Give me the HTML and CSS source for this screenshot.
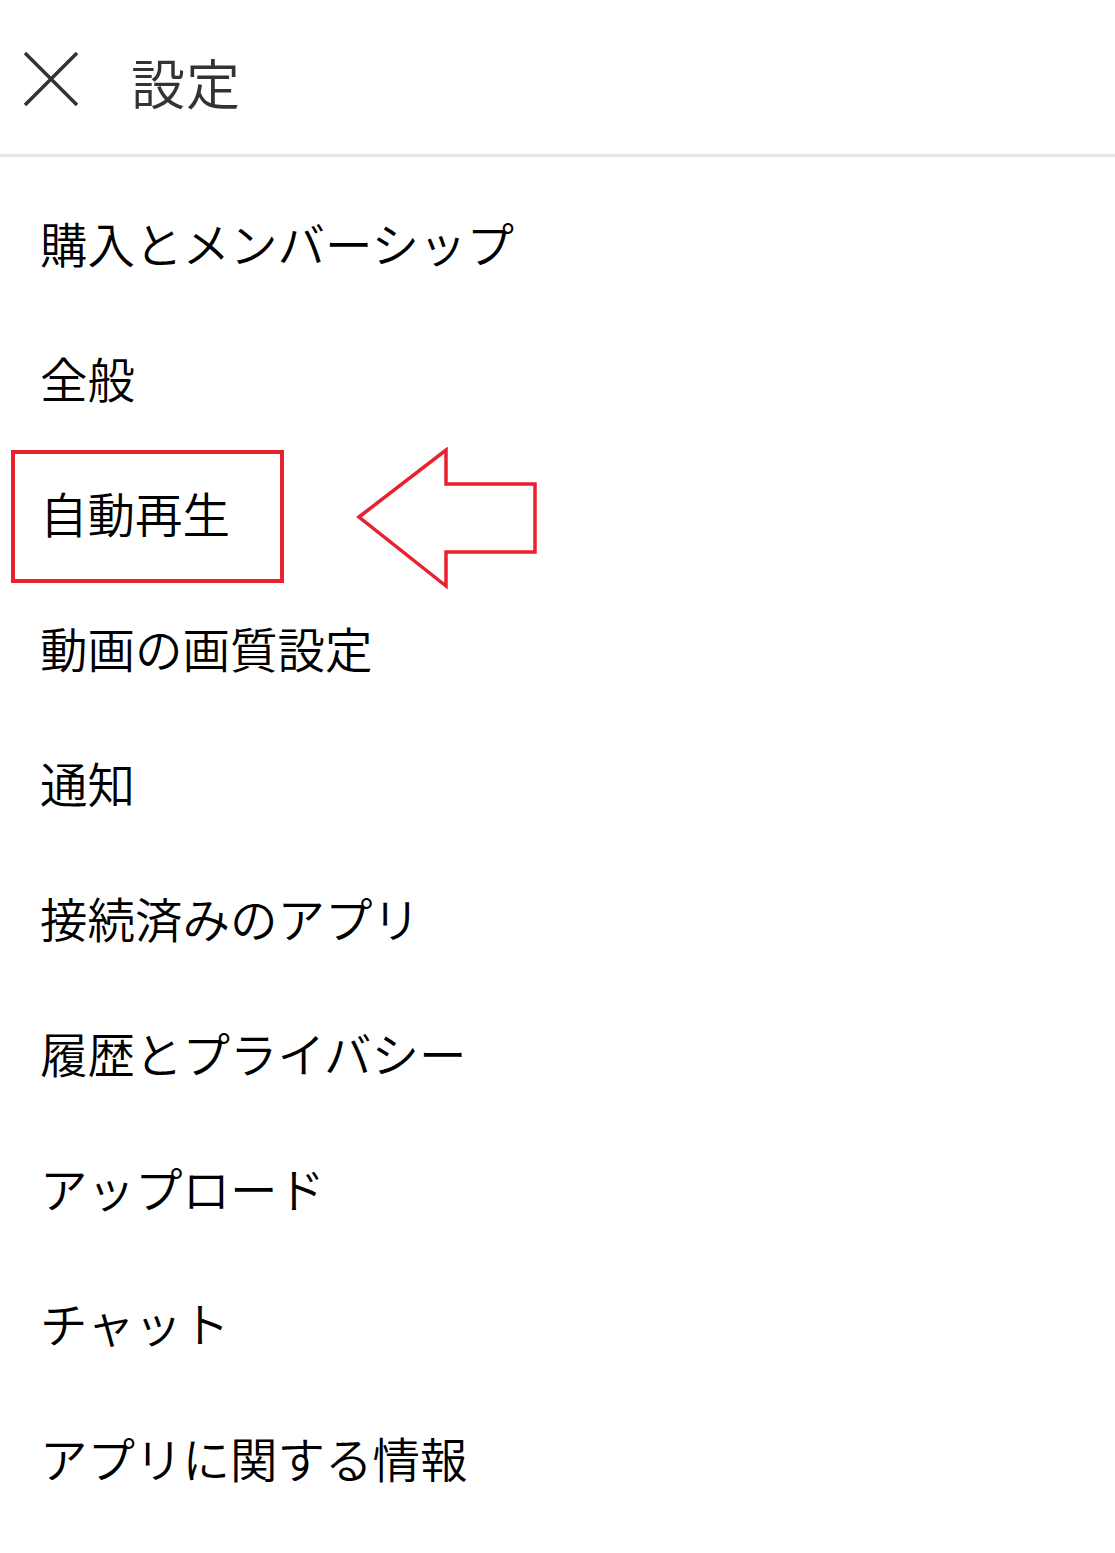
FILE: index.html
```html
<!DOCTYPE html>
<html lang="ja">
<head>
  <meta charset="UTF-8">
  <title>設定</title>
  <link rel="stylesheet" href="styles.css">
</head>
<body>
  <div class="header">
    <svg class="close" width="54" height="54" viewBox="0 0 54 54">
      <path d="M1 1 L53 53 M53 1 L1 53" stroke="#333" stroke-width="3.5" fill="none"/>
    </svg>
    <div class="title">設定</div>
  </div>
  <div class="list">
    <div class="item">購入とメンバーシップ</div>
    <div class="item">全般</div>
    <div class="item highlight">自動再生
      <div class="mark-box"></div>
      <svg class="mark-arrow" width="184" height="144" viewBox="0 0 184 144">
        <path d="M4 70 L91 3 L91 37 L180 37 L180 105 L91 105 L91 139 Z" fill="none" stroke="#e8212d" stroke-width="3.5"/>
      </svg>
    </div>
    <div class="item">動画の画質設定</div>
    <div class="item">通知</div>
    <div class="item">接続済みのアプリ</div>
    <div class="item">履歴とプライバシー</div>
    <div class="item">アップロード</div>
    <div class="item">チャット</div>
    <div class="item">アプリに関する情報</div>
  </div>
</body>
</html>
```

FILE: styles.css
```css
body {
  margin: 0;
  background-color: #ffffff;
  font-family: "Noto Sans CJK JP", "Noto Sans", sans-serif;
}
.header {
  display: flex;
  align-items: center;
  border-bottom: 3px solid #e6e6e6;
  box-sizing: border-box;
  height: 157px;
}
.close {
  margin-left: 24px;
  margin-top: 4px;
}
.title {
  margin-left: 53px;
  margin-top: 8px;
  font-size: 54px;
  font-weight: 350;
  color: #333333;
  letter-spacing: 1px;
}
.list {
  padding-top: 18px;
}
.item {
  height: 135px;
  display: flex;
  align-items: center;
  padding-left: 40px;
  font-size: 47.5px;
  font-weight: 350;
  color: #000000;
  position: relative;
}
.mark-box {
  position: absolute;
  left: 11px;
  top: 5px;
  width: 273px;
  height: 133px;
  border: 4px solid #e8212d;
  box-sizing: border-box;
}
.mark-arrow {
  position: absolute;
  left: 355px;
  top: 2px;
}
```
